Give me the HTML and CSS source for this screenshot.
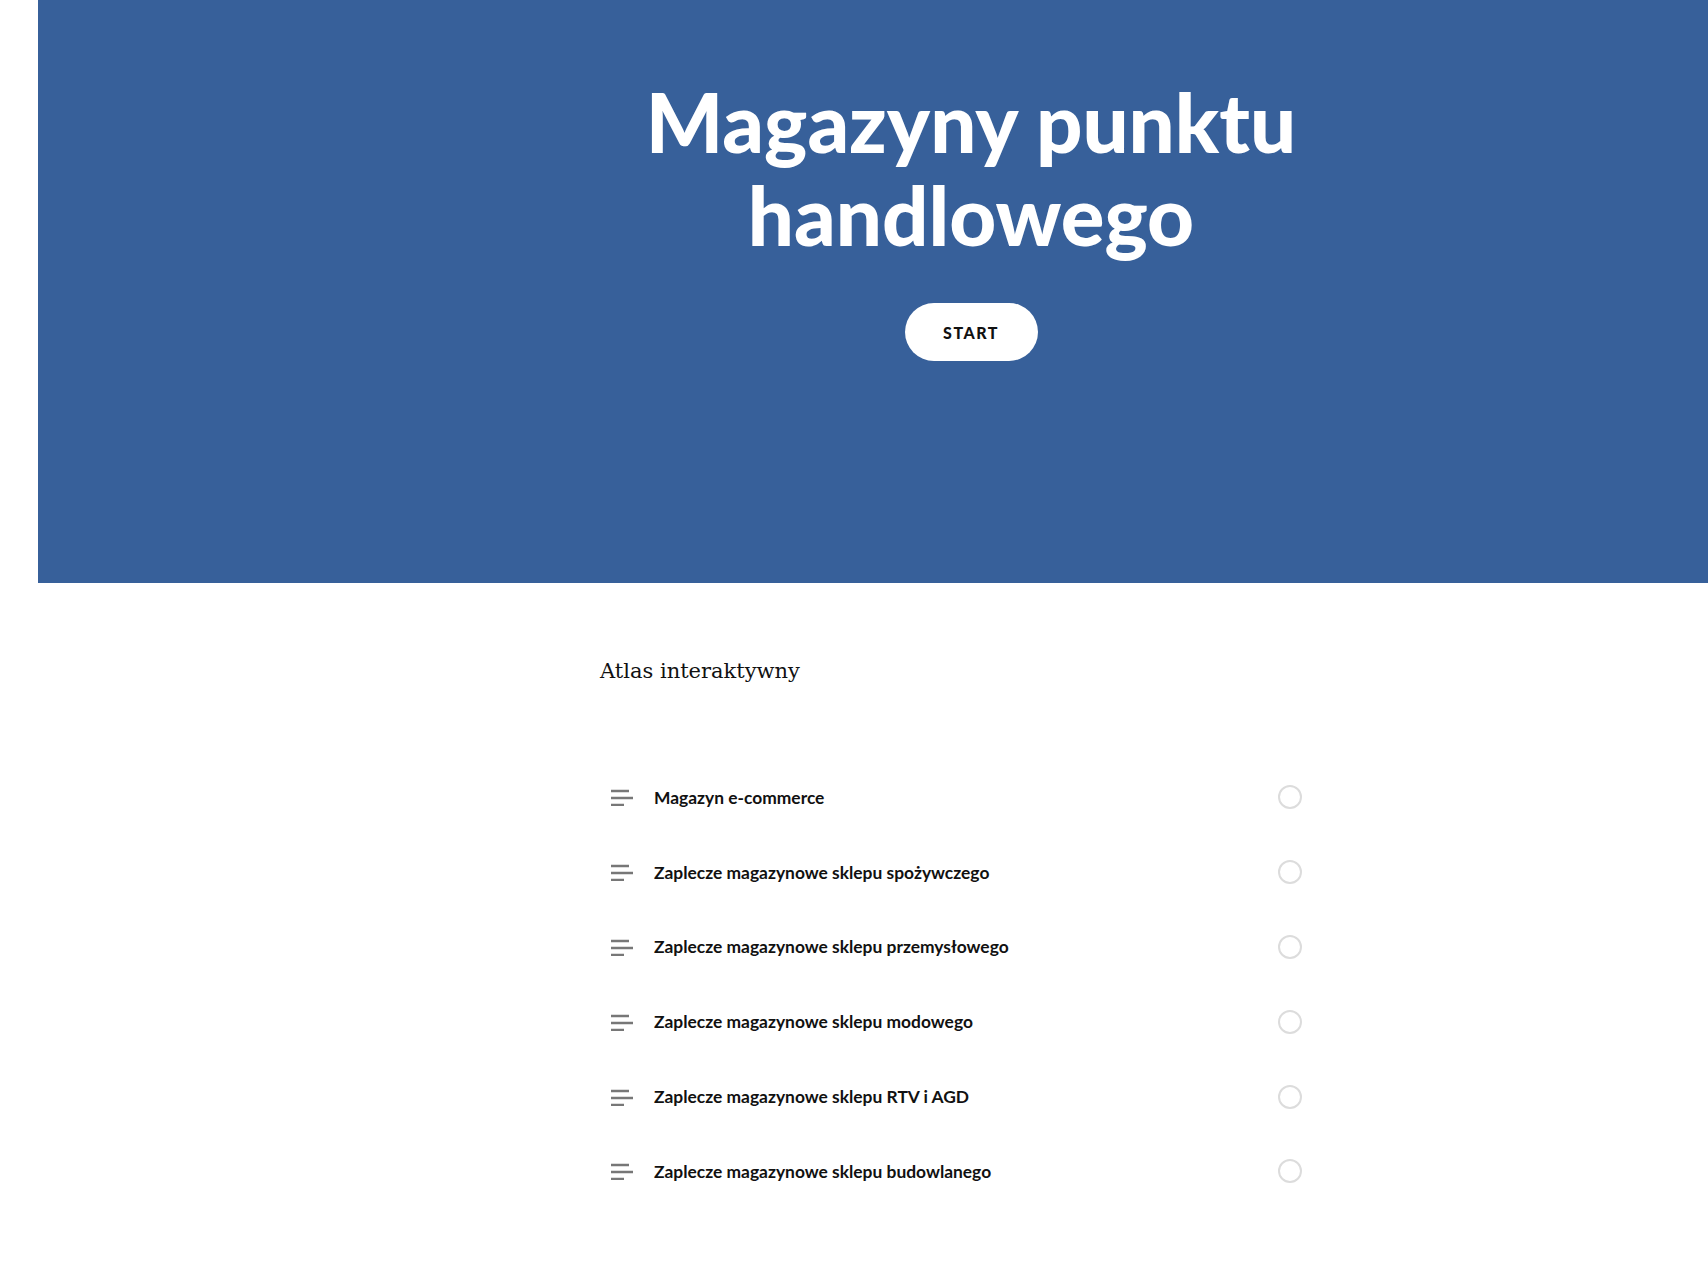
FILE: index.html
```html
<!DOCTYPE html>
<html lang="pl">
<head>
<meta charset="utf-8">
<title>Magazyny punktu handlowego</title>
<link rel="stylesheet" href="styles.css">
</head>
<body>
<div class="page">
  <header class="hero">
    <div class="column hero-inner">
      <h1 class="hero-title">Magazyny punktu handlowego</h1>
      <a class="start-btn" href="#">START</a>
    </div>
  </header>

  <main class="column lessons">
    <h2 class="lessons-title">Atlas interaktywny</h2>
    <ul class="lesson-list">
      <li class="lesson">
        <svg class="lesson-icon" viewBox="0 0 22 18" aria-hidden="true"><path d="M0 3h18M0 10h22M0 17h13"/></svg>
        <span class="lesson-name">Magazyn e-commerce</span>
        <span class="lesson-status"></span>
      </li>
      <li class="lesson">
        <svg class="lesson-icon" viewBox="0 0 22 18" aria-hidden="true"><path d="M0 3h18M0 10h22M0 17h13"/></svg>
        <span class="lesson-name">Zaplecze magazynowe sklepu spożywczego</span>
        <span class="lesson-status"></span>
      </li>
      <li class="lesson">
        <svg class="lesson-icon" viewBox="0 0 22 18" aria-hidden="true"><path d="M0 3h18M0 10h22M0 17h13"/></svg>
        <span class="lesson-name">Zaplecze magazynowe sklepu przemysłowego</span>
        <span class="lesson-status"></span>
      </li>
      <li class="lesson">
        <svg class="lesson-icon" viewBox="0 0 22 18" aria-hidden="true"><path d="M0 3h18M0 10h22M0 17h13"/></svg>
        <span class="lesson-name">Zaplecze magazynowe sklepu modowego</span>
        <span class="lesson-status"></span>
      </li>
      <li class="lesson">
        <svg class="lesson-icon" viewBox="0 0 22 18" aria-hidden="true"><path d="M0 3h18M0 10h22M0 17h13"/></svg>
        <span class="lesson-name">Zaplecze magazynowe sklepu RTV i AGD</span>
        <span class="lesson-status"></span>
      </li>
      <li class="lesson">
        <svg class="lesson-icon" viewBox="0 0 22 18" aria-hidden="true"><path d="M0 3h18M0 10h22M0 17h13"/></svg>
        <span class="lesson-name">Zaplecze magazynowe sklepu budowlanego</span>
        <span class="lesson-status"></span>
      </li>
    </ul>
  </main>
</div>
</body>
</html>
```
FILE: styles.css
```css
html, body {
  margin: 0;
  padding: 0;
  background: #fff;
}

body {
  font-family: Lato, "Liberation Sans", sans-serif;
  color: #111;
}

.page {
  padding-left: 38px;
}

.column {
  width: 742px;
  margin-left: 562px;
}

/* Cover block */
.hero {
  background: #37609a;
  height: 583px;
  box-sizing: border-box;
  padding-top: 75px;
}

.hero-inner {
  display: flex;
  flex-direction: column;
  align-items: center;
}

.hero-title {
  margin: 0;
  font-family: Lato, sans-serif;
  font-weight: 900;
  font-size: 81.5px;
  line-height: 93px;
  color: #fff;
  text-align: center;
  width: 720px;
}

.start-btn {
  margin-top: 42px;
  display: inline-flex;
  align-items: center;
  justify-content: center;
  width: 133px;
  height: 58px;
  border-radius: 29px;
  background: #fff;
  color: #111;
  text-decoration: none;
  font-weight: 900;
  font-size: 16px;
  letter-spacing: 1.5px;
}

/* Lesson list */
.lessons {
  padding-top: 77px;
}

.lessons-title {
  margin: 0;
  font-family: "DejaVu Serif", "Liberation Serif", serif;
  font-weight: 400;
  font-size: 21px;
  line-height: 23px;
  color: #111;
}

.lesson-list {
  list-style: none;
  margin: 77px 0 0;
  padding: 0;
}

.lesson {
  height: 74.8px;
  display: flex;
  align-items: center;
  padding: 0 40px 0 11px;
}

.lesson-icon {
  width: 22px;
  height: 18px;
  flex: none;
  fill: none;
  stroke: #777;
  stroke-width: 2.6;
}

.lesson-name {
  margin-left: 21px;
  flex: 1;
  font-weight: 700;
  font-size: 17.4px;
  color: #111;
}

.lesson-status {
  flex: none;
  width: 24px;
  height: 24px;
  box-sizing: border-box;
  border: 2px solid #dcdcdc;
  border-radius: 50%;
}
```
